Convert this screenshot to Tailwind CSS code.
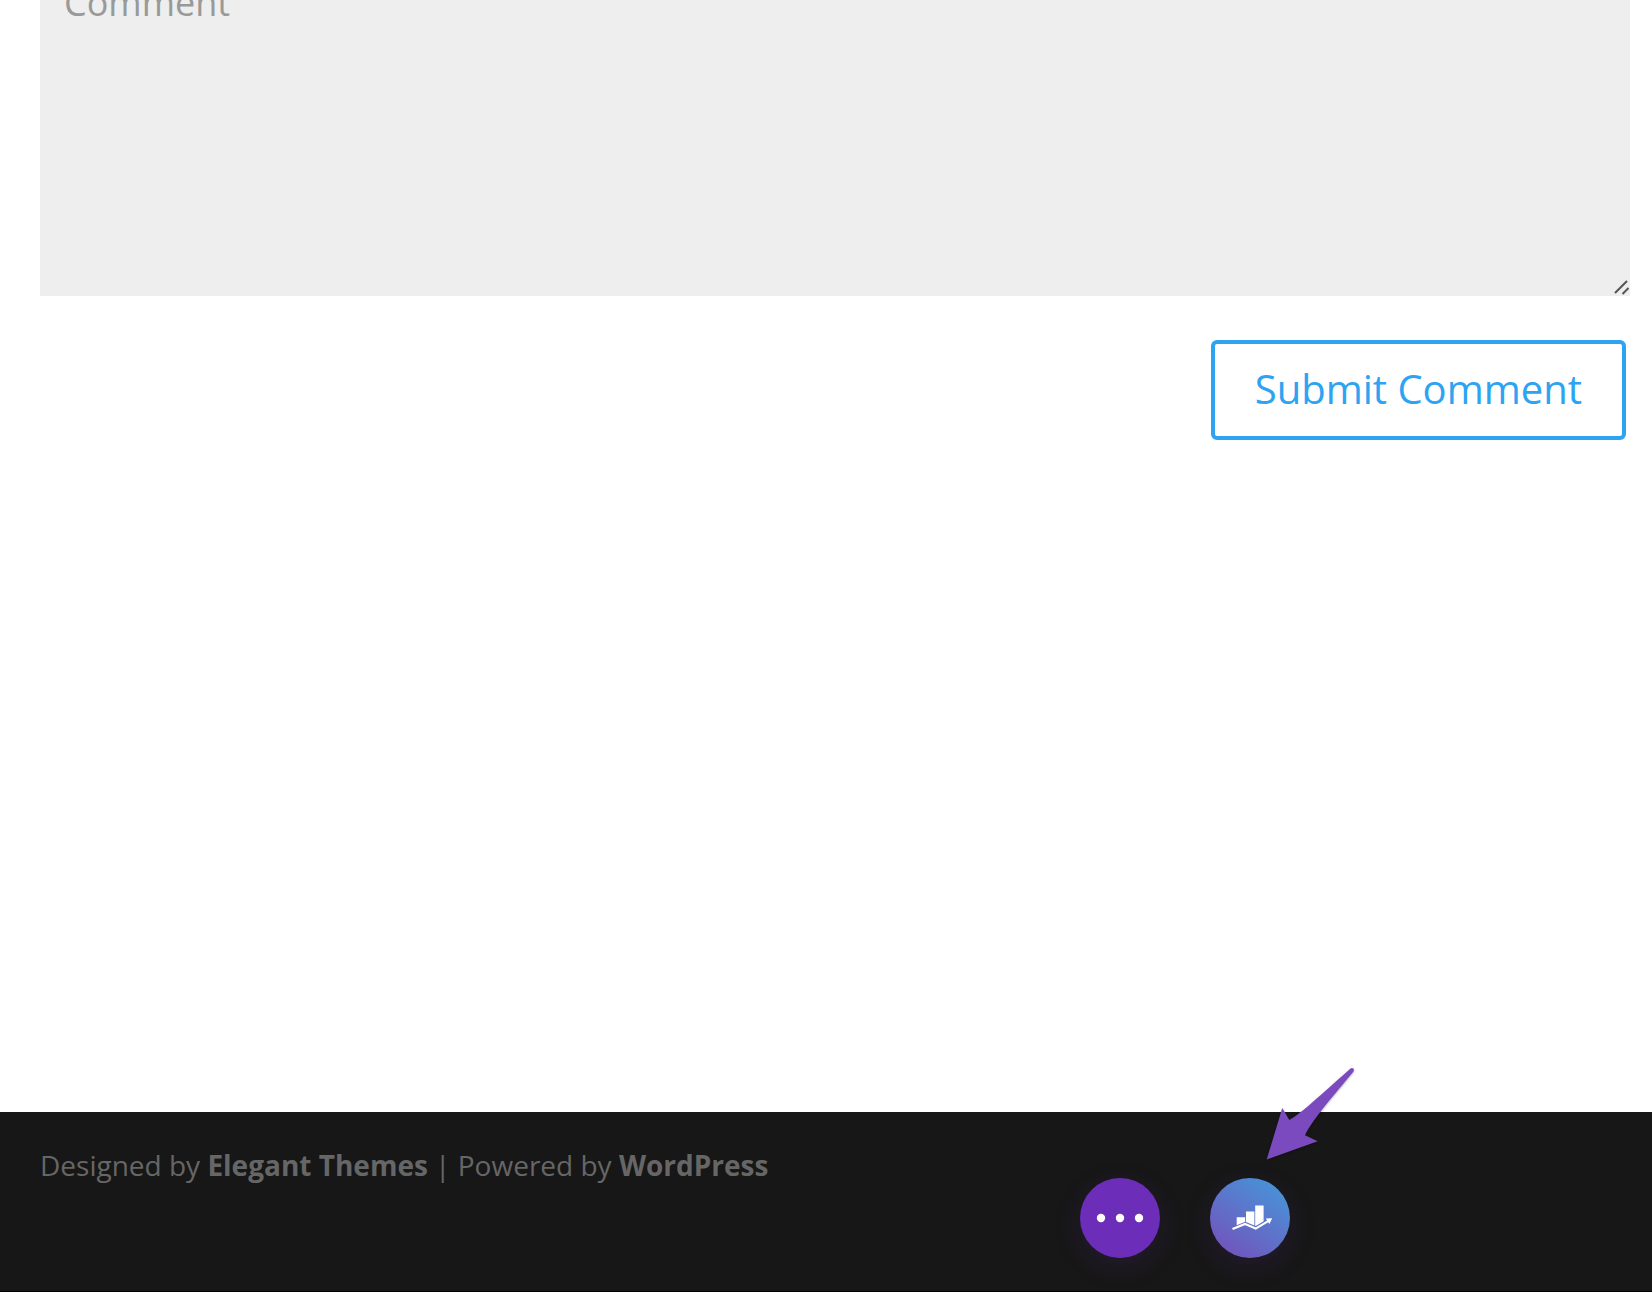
<!DOCTYPE html>
<html lang="en">
<head>
<meta charset="utf-8">
<meta name="viewport" content="width=device-width, initial-scale=1">
<title>Leave a comment</title>
<script src="https://cdn.jsdelivr.net/npm/@tailwindcss/browser@4"></script>
</head>
<body class="relative flex min-h-screen flex-col overflow-x-hidden bg-white font-['Open_Sans',sans-serif]">
  <main class="flex-1 overflow-hidden pr-[22px] pl-10">
    <form class="-mt-16">
      <div class="relative">
        <label for="comment" class="sr-only">Comment</label>
        <textarea id="comment" placeholder="Comment" class="block h-90 w-full resize-none bg-[#eeeeee] px-6 py-[42px] text-[36px] leading-[50px] text-[#4e4e4e] outline-none placeholder:text-[#999999]"></textarea>
        <svg class="pointer-events-none absolute right-0 bottom-0 h-4 w-4" viewBox="0 0 16 16" fill="none" stroke="#555" stroke-width="2" aria-hidden="true">
          <path d="M1 13 13 1M8.500 14 14.500 8"/>
        </svg>
      </div>
      <div class="flex justify-end pt-11 pr-1">
        <button type="button" class="h-25 rounded-md border-4 border-[#2ea3f2] px-10 pb-0.5 text-[40px] leading-[60px] text-[#2ea3f2]">Submit Comment</button>
      </div>
    </form>
  </main>

  <footer class="h-45 border-b border-black bg-[#171717] px-10 pt-[35px]">
    <p class="text-[28px] leading-9 text-[#666666]">Designed by <a href="#" class="font-bold">Elegant Themes</a> | Powered by <a href="#" class="font-bold">WordPress</a></p>
  </footer>

  <div class="absolute right-[362px] bottom-[34px] flex gap-[50px]">
    <button type="button" aria-label="Builder options" class="h-20 w-20 rounded-full bg-[#6c2eb9] shadow-[0_8px_28px_rgba(108,46,185,0.15)]">
      <svg viewBox="0 0 80 80" fill="#fff" aria-hidden="true"><circle cx="21" cy="40" r="4.200"/><circle cx="40" cy="40" r="4.200"/><circle cx="59" cy="40" r="4.200"/></svg>
    </button>
    <div class="relative flex">
      <button type="button" aria-label="Split test statistics" class="h-20 w-20 rounded-full bg-linear-[35deg,#7550bb_5%,#4b8fd6_85%] shadow-[0_8px_28px_rgba(108,46,185,0.15)]">
        <svg viewBox="0 0 80 80" fill="#fff" aria-hidden="true">
          <path d="M26.700 39.300H35.200V43.700L26.700 47.200ZM36 33.400H44.400V47.600L36 43.900ZM45.200 27.600H53.600V43.200L45.800 47.900 45.200 47.700Z"/>
          <path d="M22.500 51 35 46 45.700 50.600 59 42.600" fill="none" stroke="#fff" stroke-width="2.200"/>
          <path d="M55.800 40.500 62.200 40.300 59.400 46Z"/>
        </svg>
      </button>
      <svg class="pointer-events-none absolute right-[-80px] bottom-[88px] h-30 w-30 drop-shadow-[0_1px_1px_rgba(0,0,0,0.3)]" viewBox="0 0 120 120" fill="#7c4abf" aria-hidden="true">
        <path d="M16.700 109.500 32.300 58 39.300 70C50 64 62 53 100.500 18.500Q102 17.500 103.400 18.500 104.300 20 103.500 21.500C85 44 62 70 55 85.300L67.700 91.300Z"/>
      </svg>
    </div>
  </div>
</body>
</html>
